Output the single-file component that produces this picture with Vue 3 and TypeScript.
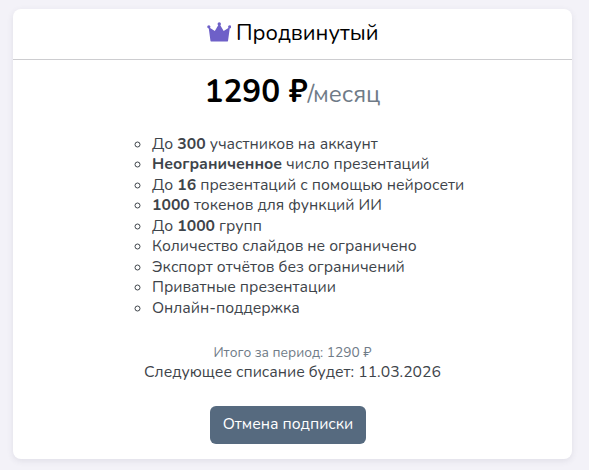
<script setup lang="ts">
interface Part {
  text: string
  bold?: boolean
}

const features: Part[][] = [
  [{ text: 'До ' }, { text: '300', bold: true }, { text: ' участников на аккаунт' }],
  [{ text: 'Неограниченное', bold: true }, { text: ' число презентаций' }],
  [{ text: 'До ' }, { text: '16', bold: true }, { text: ' презентаций с помощью нейросети' }],
  [{ text: '1000', bold: true }, { text: ' токенов для функций ИИ' }],
  [{ text: 'До ' }, { text: '1000', bold: true }, { text: ' групп' }],
  [{ text: 'Количество слайдов не ограничено' }],
  [{ text: 'Экспорт отчётов без ограничений' }],
  [{ text: 'Приватные презентации' }],
  [{ text: 'Онлайн-поддержка' }],
]
</script>

<template>
  <main class="page">
    <section class="card">
      <header class="card-header">
        <svg class="crown" viewBox="0 0 24 20" aria-hidden="true">
          <path d="M2.1 5.4 7.6 8.9 11.1 3h1.8l3.5 5.9 5.5-3.5.6.9-1.7 12.4q-.2.9-1.1.9H4.3q-.9 0-1.1-.9L1.5 6.3z" />
          <circle cx="12" cy="1.9" r="1.7" />
          <circle cx="1.6" cy="4.8" r="1.6" />
          <circle cx="22.4" cy="4.8" r="1.6" />
        </svg>
        <h2 class="title">Продвинутый</h2>
      </header>
      <div class="card-body">
        <h1 class="price"><span class="amount">1290 ₽</span><span class="period">/месяц</span></h1>
        <ul class="features">
          <li v-for="(parts, i) in features" :key="i">
            <span v-for="(part, j) in parts" :key="j" :class="{ strong: part.bold }">{{ part.text }}</span>
          </li>
        </ul>
        <p class="total">Итого за период: 1290 ₽</p>
        <p class="next">Следующее списание будет: 11.03.2026</p>
        <button class="cancel" type="button">Отмена подписки</button>
      </div>
    </section>
  </main>
</template>

<style>
body {
  margin: 0;
  background: #f3f2f8;
}
</style>

<style scoped>
.page {
  box-sizing: border-box;
  height: 470px;
  padding: 9px 17px 11px 13px;
  background: #f3f2f8;
  font-family: Nunito, "Noto Sans", sans-serif;
  color: #3e444a;
}
.card {
  height: 450px;
  overflow: hidden;
  border-radius: 8px;
  background: #fff;
  box-shadow: 0 2px 6px rgba(60, 60, 90, 0.1);
}
.card-header {
  box-sizing: border-box;
  height: 51px;
  display: flex;
  justify-content: center;
  align-items: center;
  gap: 5px;
  padding-bottom: 3px;
  border-bottom: 1px solid #cdcdd0;
}
.crown {
  width: 24.5px;
  height: 20px;
  margin-bottom: 2px;
  fill: #6e60c8;
}
.title {
  margin: 0;
  font-size: 21.9px;
  line-height: 28px;
  font-weight: 400;
  color: #000;
}
.card-body {
  display: flex;
  flex-direction: column;
  align-items: center;
}
.price {
  display: flex;
  align-items: baseline;
  height: 42px;
  margin: 11px 0 0;
  line-height: 42px;
  white-space: nowrap;
}
.amount {
  font-size: 31.5px;
  font-weight: 700;
  color: #000;
}
.period {
  font-size: 24px;
  font-weight: 400;
  color: #6f7b87;
}
.features {
  align-self: flex-start;
  margin: 21px 0 0 139px;
  padding: 0;
  list-style: circle;
  font-size: 15.75px;
  line-height: 20.475px;
  white-space: pre;
}
.strong {
  font-weight: 700;
}
.total {
  margin: 25px 0 0;
  font-size: 13.75px;
  line-height: 19px;
  color: #6f7b87;
}
.next {
  margin: 0;
  font-size: 15.75px;
  line-height: 20px;
}
.cancel {
  box-sizing: border-box;
  width: 156px;
  height: 38px;
  margin: 24px 9px 0 0;
  padding: 0 0 3px;
  border: 0;
  border-radius: 6px;
  background: #566a7f;
  color: #fff;
  font: inherit;
  font-size: 15.75px;
  white-space: nowrap;
}
</style>
